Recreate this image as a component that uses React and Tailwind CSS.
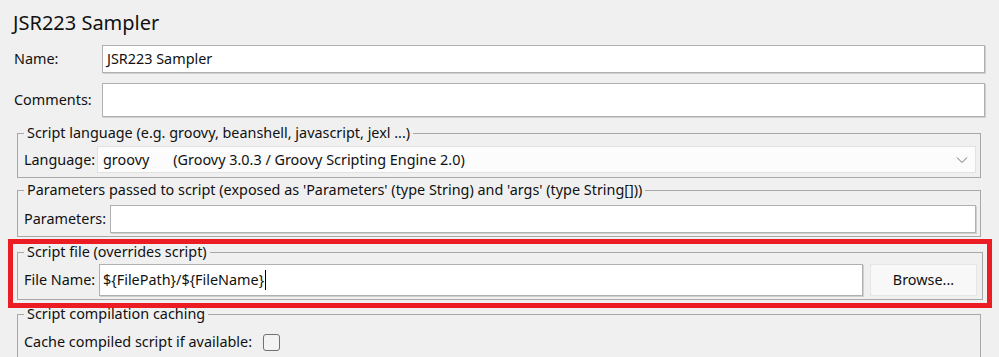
import React from "react";

const Chevron = () => (
  <svg width="12" height="8" viewBox="0 0 12 8" className="mr-[7px]">
    <path d="M1 1.5 L6 6.5 L11 1.5" fill="none" stroke="#6d6d6d" strokeWidth="1" />
  </svg>
);

const App = () => {
  return (
    <div className="w-[999px] h-[357px] overflow-hidden bg-[#f0f0f0] text-[14.4px] leading-[18px] text-[#111] font-['Noto_Sans',sans-serif]">
      <div className="pl-[13px] pt-[11px] text-[20px] leading-[24px]">JSR223 Sampler</div>

      <div className="flex items-center pl-[14px] pr-[14px] mt-[10px]">
        <span className="w-[88px] shrink-0">Name:</span>
        <div className="flex-1 h-[28px] bg-white border border-[#b0b0b0] shadow-[1px_1px_0_#cfcfcf] flex items-center pl-[4px]">
          JSR223 Sampler
        </div>
      </div>

      <div className="flex items-center pl-[14px] pr-[14px] mt-[10px]">
        <span className="w-[88px] shrink-0">Comments:</span>
        <div className="flex-1 h-[34px] bg-white border border-[#b0b0b0] shadow-[1px_1px_0_#cfcfcf]"></div>
      </div>

      <fieldset className="ml-[17px] mr-[18px] mt-[8px] border border-[#a8a8a8] pl-[6px] pr-[4px] pb-[4px]">
        <legend className="px-[3px] leading-[16px]">Script language (e.g. groovy, beanshell, javascript, jexl ...)</legend>
        <div className="flex items-center mt-[5px]">
          <span className="w-[73px] shrink-0 whitespace-nowrap">Language:</span>
          <div className="flex-1 h-[27px] bg-[#fcfcfc] border border-[#e2e2e2] flex items-center justify-between pl-[5px]">
            <span className="whitespace-nowrap">
              groovy<span className="inline-block w-[24px]"></span>(Groovy 3.0.3 / Groovy Scripting Engine 2.0)
            </span>
            <Chevron />
          </div>
        </div>
      </fieldset>

      <fieldset className="ml-[17px] mr-[18px] mt-[4px] border border-[#a8a8a8] pl-[6px] pr-[4px] pb-[3px]">
        <legend className="px-[3px] leading-[16px]">
          Parameters passed to script (exposed as 'Parameters' (type String) and 'args' (type String[]))
        </legend>
        <div className="flex items-center mt-[7px]">
          <span className="w-[86px] shrink-0 whitespace-nowrap">Parameters:</span>
          <div className="flex-1 h-[28px] bg-white border border-[#b0b0b0] shadow-[1px_1px_0_#cfcfcf]"></div>
        </div>
      </fieldset>

      <div className="ml-[8px] mr-[7px] mt-[2px] border-[5px] border-[#ec1c24] px-[4px] pb-[3px]">
        <fieldset className="border border-[#a8a8a8] pl-[6px] pr-[5px] pb-[3px]">
          <legend className="px-[3px] leading-[16px]">Script file (overrides script)</legend>
          <div className="flex items-center mt-[4px]">
            <span className="w-[75px] shrink-0 whitespace-nowrap">File Name:</span>
            <div className="flex-1 h-[32px] bg-white border border-[#b0b0b0] shadow-[1px_1px_0_#cfcfcf] flex items-center pl-[3px]">
              {"${FilePath}/${FileName}"}
              <span className="inline-block w-[1px] h-[20px] bg-black ml-[1px]"></span>
            </div>
            <button className="ml-[7px] w-[107px] h-[32px] bg-[#f8f8f8] border border-[#e6e6e6] text-[#111]">
              Browse...
            </button>
          </div>
        </fieldset>
      </div>

      <fieldset className="ml-[17px] mr-[18px] -mt-[2px] border border-[#a8a8a8] pl-[6px] pr-[4px] h-[80px]">
        <legend className="px-[3px] leading-[16px]">Script compilation caching</legend>
        <div className="flex items-center mt-[11px]">
          <span>Cache compiled script if available:</span>
          <span className="ml-[11px] inline-block w-[17px] h-[17px] rounded-[3px] border border-[#707070] bg-[#f3f3f3]"></span>
        </div>
      </fieldset>
    </div>
  );
};

export default App;
